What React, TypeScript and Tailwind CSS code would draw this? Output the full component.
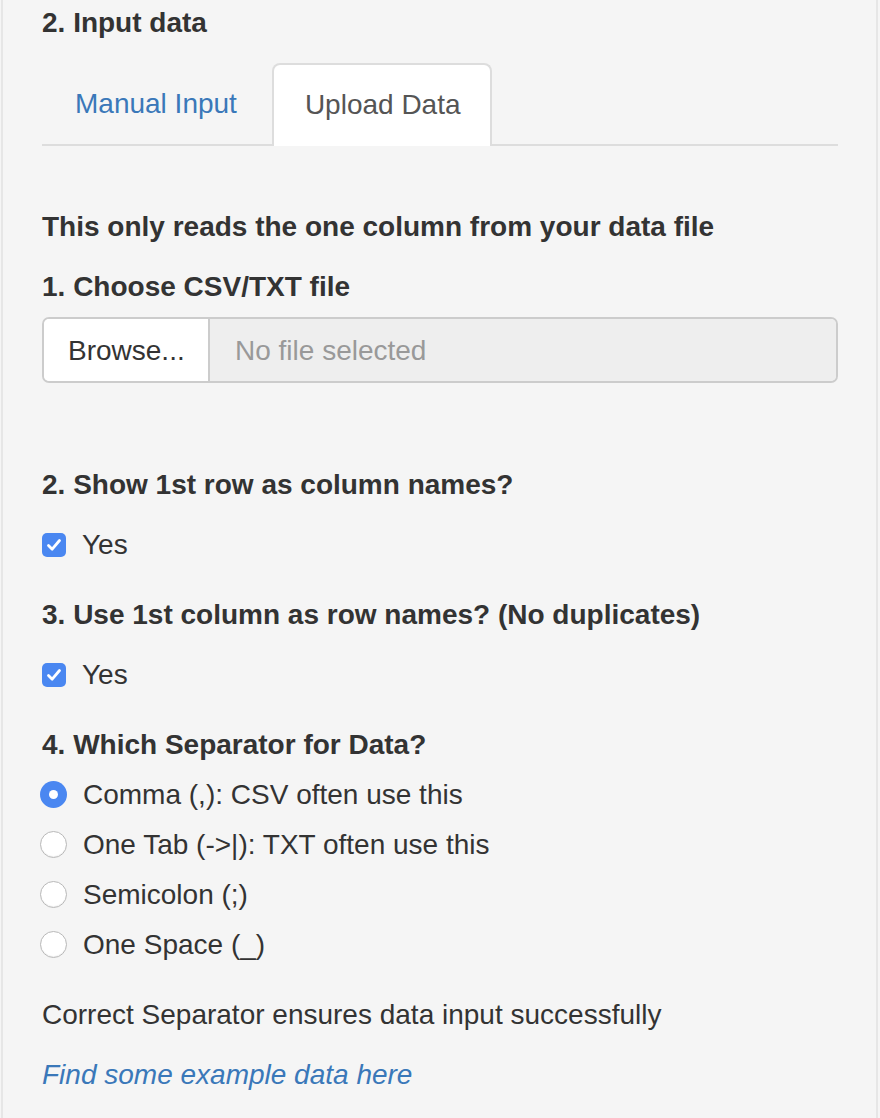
import React from "react";

const Check = () => (
  <span className="flex h-[24px] w-[24px] items-center justify-center rounded-[5px] bg-[#4a87f1]">
    <svg width="24" height="24" viewBox="0 0 24 24" fill="none">
      <path d="M6.5 12.5 L10.2 16.2 L17.5 7.5" stroke="white" strokeWidth="2.8" strokeLinecap="round" strokeLinejoin="round" />
    </svg>
  </span>
);

const Radio = ({ checked }: { checked?: boolean }) =>
  checked ? (
    <span className="flex h-[27px] w-[27px] items-center justify-center rounded-full bg-[#4a87f1]">
      <span className="h-[9px] w-[9px] rounded-full bg-white" />
    </span>
  ) : (
    <span className="h-[27px] w-[27px] rounded-full border border-[#b8b8b8] bg-white shadow-[inset_0_-1px_1px_rgba(0,0,0,0.06)]" />
  );

export default function App() {
  const radios = [
    "Comma (,): CSV often use this",
    "One Tab (->|): TXT often use this",
    "Semicolon (;)",
    "One Space (_)",
  ];
  return (
    <div
      className="min-h-[1118px] w-[880px] bg-[#f5f5f5] text-[28px] leading-[37px] text-[#333]"
      style={{ fontFamily: '"Liberation Sans", Arial, sans-serif' }}
    >
      <div className="ml-[1px] mr-[2px] min-h-[1118px] border-x-2 border-[#e6e6e6] bg-[#f5f5f5] pl-[39px] pr-[38px] pt-[4px]">
        <div className="font-bold">2. Input data</div>

        <div className="mt-[22px] flex border-b-2 border-[#dddddd]">
          <div className="flex h-[81px] items-center pl-[33px] pr-[35px] text-[#3a78b9]">Manual Input</div>
          <div className="-mb-[2px] flex h-[83px] items-center rounded-t-[8px] border-2 border-b-0 border-[#dddddd] bg-white pb-[2px] pl-[31px] pr-[29px] text-[#555]">
            Upload Data
          </div>
        </div>

        <div className="mt-[62px] font-bold">This only reads the one column from your data file</div>
        <div className="mt-[23px] font-bold">1. Choose CSV/TXT file</div>

        <div className="mt-[12px] flex h-[66px] overflow-hidden rounded-[7px] border-2 border-[#cccccc]">
          <div className="flex w-[166px] items-center border-r-2 border-[#cccccc] bg-white pl-[24px] text-[#333]">Browse...</div>
          <div className="flex flex-1 items-center bg-[#eeeeee] pl-[25px] text-[#999]">No file selected</div>
        </div>

        <div className="mt-[83px] font-bold">2. Show 1st row as column names?</div>
        <div className="mt-[23px] flex items-center gap-[16px]">
          <Check />
          <span>Yes</span>
        </div>

        <div className="mt-[33px] font-bold">3. Use 1st column as row names? (No duplicates)</div>
        <div className="mt-[23px] flex items-center gap-[16px]">
          <Check />
          <span>Yes</span>
        </div>

        <div className="mt-[33px] font-bold">4. Which Separator for Data?</div>
        <div className="mt-[13px] flex flex-col gap-[13px]">
          {radios.map((r, i) => (
            <div key={r} className="-ml-[2px] flex items-center gap-[16px]">
              <Radio checked={i === 0} />
              <span>{r}</span>
            </div>
          ))}
        </div>

        <div className="mt-[33px]">Correct Separator ensures data input successfully</div>
        <div className="mt-[23px] italic text-[#3a78b9]">Find some example data here</div>
      </div>
    </div>
  );
}
